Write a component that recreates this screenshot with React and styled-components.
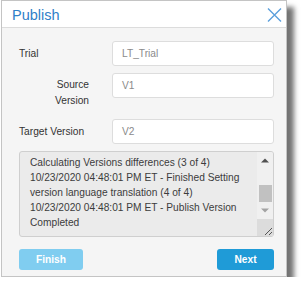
import React from "react";
import styled, { createGlobalStyle } from "styled-components";

const Global = createGlobalStyle`
  html, body { margin: 0; padding: 0; background: #ffffff; }
  body { font-family: "Liberation Sans", Arial, sans-serif; }
`;

const Page = styled.div`
  padding: 0 0 0 1px;
`;

const Dialog = styled.div`
  width: 286px;
  height: 277px;
  box-sizing: border-box;
  border: 1px solid #c4c4c4;
  background: #f5f5f5;
  box-shadow: 7px 7px 5px rgba(0, 0, 0, 0.55);
  display: flex;
  flex-direction: column;
`;

const Header = styled.div`
  height: 26px;
  background: #ffffff;
  border-bottom: 1px solid #dcdcdc;
  display: flex;
  align-items: center;
  justify-content: space-between;
  padding: 0 4px 0 10px;
  flex-shrink: 0;
`;

const Title = styled.div`
  font-size: 14.5px;
  color: #2f80c8;
  line-height: 1;
  margin-top: 2px;
`;

const Close = styled.button`
  border: 0;
  background: transparent;
  padding: 0;
  width: 16px;
  height: 16px;
  display: flex;
  align-items: center;
  justify-content: center;
  cursor: pointer;
  margin-top: 1px;
`;

const Body = styled.div`
  padding: 13px 12px 0 17px;
  display: flex;
  flex-direction: column;
`;

const Row = styled.div`
  display: flex;
  align-items: ${(p) => (p.$top ? "flex-start" : "center")};
  margin-bottom: ${(p) => p.$gap}px;
`;

const Label = styled.div`
  width: 93px;
  flex-shrink: 0;
  font-size: 10.2px;
  line-height: 15.5px;
  color: #333333;
  text-align: ${(p) => (p.$right ? "right" : "left")};
  padding-right: ${(p) => (p.$right ? "23px" : "0")};
  box-sizing: border-box;
  padding-top: ${(p) => (p.$top ? "4px" : "0")};
`;

const Input = styled.div`
  width: 162px;
  height: 25px;
  box-sizing: border-box;
  background: #ffffff;
  border: 1px solid #dddddd;
  border-radius: 3px;
  font-size: 10.2px;
  color: #8a8a8a;
  display: flex;
  align-items: center;
  padding-left: 9px;
`;

const LogBox = styled.div`
  width: 255px;
  height: 86px;
  box-sizing: border-box;
  border: 1px solid #cfcfcf;
  border-radius: 3px;
  background: #ebebeb;
  display: flex;
  overflow: hidden;
`;

const LogText = styled.div`
  flex: 1;
  padding: 3px 0 0 10px;
  font-size: 10.2px;
  line-height: 15px;
  color: #3c3c3c;
  white-space: nowrap;
  overflow: hidden;
`;

const Scrollbar = styled.div`
  width: 16px;
  display: flex;
  flex-direction: column;
  background: #f0f0f0;
`;

const ArrowBtn = styled.div`
  height: 17px;
  display: flex;
  align-items: center;
  justify-content: center;
  flex-shrink: 0;
`;

const Track = styled.div`
  flex: 1;
  display: flex;
  flex-direction: column;
  justify-content: flex-end;
  align-items: center;
`;

const Thumb = styled.div`
  width: 13px;
  height: 17px;
  background: #c1c1c1;
`;

const Corner = styled.div`
  height: 17px;
  background: #dcdcdc;
  display: flex;
  align-items: flex-end;
  justify-content: flex-end;
  flex-shrink: 0;
`;

const Footer = styled.div`
  display: flex;
  justify-content: space-between;
  padding: 12px 12px 0 17px;
`;

const Button = styled.button`
  height: 21px;
  width: ${(p) => p.$w}px;
  border: 0;
  border-radius: 3px;
  background: ${(p) => (p.$disabled ? "#80cdf0" : "#1f9bd7")};
  color: #ffffff;
  font-family: "Liberation Sans", Arial, sans-serif;
  font-weight: bold;
  font-size: 10.2px;
  padding: 0;
  cursor: pointer;
`;

export default function App() {
  return (
    <Page>
      <Global />
      <Dialog>
        <Header>
          <Title>Publish</Title>
          <Close aria-label="close">
            <svg width="15" height="14" viewBox="0 0 15 14">
              <path d="M1 0.5 L14 13.5 M14 0.5 L1 13.5" stroke="#5b9fdc" strokeWidth="1.4" fill="none" />
            </svg>
          </Close>
        </Header>
        <Body>
          <Row $gap={7}>
            <Label>Trial</Label>
            <Input>LT_Trial</Input>
          </Row>
          <Row $gap={11} $top>
            <Label $right $top>
              Source
              <br />
              Version
            </Label>
            <Input>V1</Input>
          </Row>
          <Row $gap={7}>
            <Label>Target Version</Label>
            <Input>V2</Input>
          </Row>
          <LogBox>
            <LogText>
              <div>Calculating Versions differences (3 of 4)</div>
              <div>10/23/2020 04:48:01 PM ET - Finished Setting</div>
              <div>version language translation (4 of 4)</div>
              <div>10/23/2020 04:48:01 PM ET - Publish Version</div>
              <div>Completed</div>
            </LogText>
            <Scrollbar>
              <ArrowBtn>
                <svg width="8" height="5" viewBox="0 0 8 5">
                  <path d="M0 4.5 L4 0.5 L8 4.5 Z" fill="#505050" />
                </svg>
              </ArrowBtn>
              <Track>
                <Thumb />
              </Track>
              <ArrowBtn>
                <svg width="8" height="5" viewBox="0 0 8 5">
                  <path d="M0 0.5 L4 4.5 L8 0.5 Z" fill="#a3a3a3" />
                </svg>
              </ArrowBtn>
              <Corner>
                <svg width="10" height="10" viewBox="0 0 10 10">
                  <path d="M9 2 L2 9 M9 6 L6 9" stroke="#555" strokeWidth="1" fill="none" />
                </svg>
              </Corner>
            </Scrollbar>
          </LogBox>
        </Body>
        <Footer>
          <Button $w={64} $disabled>Finish</Button>
          <Button $w={57}>Next</Button>
        </Footer>
      </Dialog>
    </Page>
  );
}
